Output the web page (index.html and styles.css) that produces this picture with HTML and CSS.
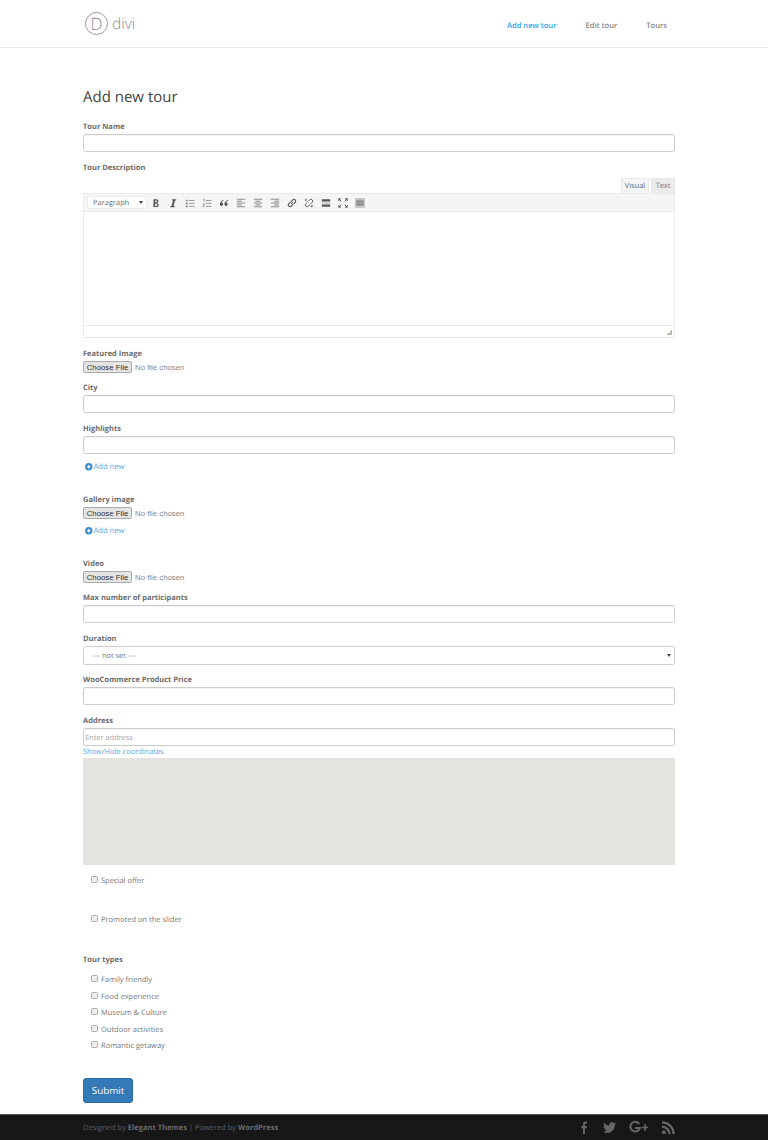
FILE: index.html
```html
<!DOCTYPE html>
<html lang="en">
<head>
<meta charset="utf-8">
<title>Add new tour</title>
<link rel="stylesheet" href="styles.css">
</head>
<body>
<header class="site-header">
  <div class="logo"><span class="logo-mark">D</span><span class="logo-word">divi</span></div>
  <nav class="nav">
    <a class="nav-link active">Add new tour</a>
    <a class="nav-link">Edit tour</a>
    <a class="nav-link">Tours</a>
  </nav>
</header>
<main class="page">
  <h1 class="title">Add new tour</h1>
  <form class="form">
    <div class="field"><label class="label">Tour Name</label><input class="input" type="text"></div>

    <div class="editor-field">
      <label class="label">Tour Description</label>
      <div class="tabs"><span class="tab tab-on">Visual</span><span class="tab">Text</span></div>
      <div class="editor">
        <div class="toolbar">
          <div class="format"><span>Paragraph</span><i class="caret"></i></div>
          <div class="tools">
          <svg class="tool" viewBox="0 0 12 12"><path d="M3 1.500h3.600c3 0 3 4 .4 4.400 3 .2 3.200 5-.3 5H3zM5 3v2.200h1.300c1.200 0 1.200-2.200 0-2.200zM5 6.800v2.700h1.500c1.400 0 1.400-2.700 0-2.700z" fill="#555" fill-rule="evenodd"/></svg>
          <svg class="tool" viewBox="0 0 12 12"><path d="M5 1.500h5L9.700 3H8.400L6.700 9.500H8L7.700 11h-5L3 9.500h1.300L6 3H4.700z" fill="#555"/></svg>
          <svg class="tool" viewBox="0 0 12 12"><path d="M1 2h2v2H1zM1 5.500h2v2H1zM1 9h2v2H1z" fill="#777"/><path d="M4.500 3h7M4.500 6.500h7M4.500 10h7" stroke="#888" fill="none"/></svg>
          <svg class="tool" viewBox="0 0 12 12"><path d="M1.500 1.500h1v2.500M1 7h2L1 10h2" stroke="#777" fill="none" stroke-width=".8"/><path d="M4.500 3h7M4.500 6.500h7M4.500 10h7" stroke="#888" fill="none"/></svg>
          <svg class="tool" viewBox="0 0 12 12"><path d="M5.500 2.500C3 3.200 1 5 1 7.500a2 2 0 1 0 2-2c0-1 1-1.800 2.500-2.200zM11 2.500C8.500 3.200 6.500 5 6.500 7.500a2 2 0 1 0 2-2c0-1 1-1.800 2.500-2.200z" fill="#555"/></svg>
          <svg class="tool" viewBox="0 0 12 12"><path d="M1 1.500h10M1 3.800h6M1 6h10M1 8.300h6M1 10.500h10" stroke="#777" fill="none"/></svg>
          <svg class="tool" viewBox="0 0 12 12"><path d="M1 1.500h10M3 3.800h6M1 6h10M3 8.300h6M1 10.500h10" stroke="#777" fill="none"/></svg>
          <svg class="tool" viewBox="0 0 12 12"><path d="M1 1.500h10M5 3.800h6M1 6h10M5 8.300h6M1 10.500h10" stroke="#777" fill="none"/></svg>
          <svg class="tool" viewBox="0 0 12 12"><path d="M5 7l2-2M4.800 4.200l2-2a2 2 0 0 1 3 3l-2 2M7.200 7.800l-2 2a2 2 0 0 1-3-3l2-2" stroke="#555" stroke-width="1.300" fill="none"/></svg>
          <svg class="tool" viewBox="0 0 12 12"><path d="M4.800 4.200l2-2a2 2 0 0 1 3 3l-2 2M7.200 7.800l-2 2a2 2 0 0 1-3-3l2-2M1 2.500h2M2.500 1v2M9 11V9M11 9.500H9" stroke="#666" stroke-width="1.200" fill="none"/></svg>
          <svg class="tool" viewBox="0 0 12 12"><path d="M1 1.500h10v2.700H1zM1 7.800h10v2.700H1z" fill="#555"/><path d="M1 6h10" stroke="#888" stroke-width=".8"/></svg>
          <svg class="tool" viewBox="0 0 12 12"><path d="M1 1l3 3M11 1L8 4M1 11l3-3M11 11L8 8M1 1h2.500M1 1v2.500M11 1H8.500M11 1v2.500M1 11h2.500M1 11V8.500M11 11H8.500M11 11V8.500" stroke="#555" stroke-width="1.200" fill="none"/></svg>
          <svg class="tool tool-on" viewBox="0 0 12 12"><path d="M1 2h10v8H1z" fill="#aaa"/><path d="M2 4h8M2 6h8M2 8h8" stroke="#666" stroke-width=".8" stroke-dasharray="1 .5"/></svg>
          </div>
        </div>
        <div class="editor-body"></div>
        <div class="editor-status"><i class="grip"></i></div>
      </div>
    </div>

    <div class="field field-file"><label class="label">Featured Image</label><input class="file" type="file"></div>
    <div class="field"><label class="label">City</label><input class="input" type="text"></div>
    <div class="field field-repeat"><label class="label">Highlights</label><input class="input" type="text">
      <a class="add-new add-after-input"><svg class="plus" viewBox="0 0 12 12"><circle cx="6" cy="6" r="6" fill="#3b8fd0"/><path d="M6 3v6M3 6h6" stroke="#fff" stroke-width="1.700"/></svg>Add new</a>
    </div>
    <div class="field field-gallery"><label class="label">Gallery image</label><input class="file" type="file">
      <a class="add-new add-after-file"><svg class="plus" viewBox="0 0 12 12"><circle cx="6" cy="6" r="6" fill="#3b8fd0"/><path d="M6 3v6M3 6h6" stroke="#fff" stroke-width="1.700"/></svg>Add new</a>
    </div>
    <div class="field field-file"><label class="label">Video</label><input class="file" type="file"></div>
    <div class="field"><label class="label">Max number of participants</label><input class="input" type="text"></div>
    <div class="field"><label class="label">Duration</label>
      <div class="select"><span>--- not set ---</span><i class="caret"></i></div>
    </div>
    <div class="field"><label class="label">WooCommerce Product Price</label><input class="input" type="text"></div>
    <div class="field-address"><label class="label">Address</label><input class="input input-address" type="text" placeholder="Enter address">
      <a class="coords">Show/Hide coordinates</a>
      <div class="map"></div>
    </div>

    <label class="check check-single"><input type="checkbox"><span>Special offer</span></label>
    <label class="check check-single"><input type="checkbox"><span>Promoted on the slider</span></label>

    <div class="types">
      <label class="label">Tour types</label>
      <div class="type-list">
        <label class="check"><input type="checkbox"><span>Family friendly</span></label>
        <label class="check"><input type="checkbox"><span>Food experience</span></label>
        <label class="check"><input type="checkbox"><span>Museum &amp; Culture</span></label>
        <label class="check"><input type="checkbox"><span>Outdoor activities</span></label>
        <label class="check"><input type="checkbox"><span>Romantic getaway</span></label>
      </div>
    </div>
    <button class="submit" type="button">Submit</button>
  </form>
</main>
<footer class="site-footer">
  <p class="credits">Designed by <b>Elegant Themes</b> | Powered by <b>WordPress</b></p>
  <div class="social">
    <svg class="soc soc-f" viewBox="0 0 8 15" preserveAspectRatio="none"><path d="M5.200 15V8.500h2.200l.4-2.600H5.200V4.300c0-.8.300-1.300 1.300-1.300H8V.6C7.700.500 6.900.5 6 .5 4 .5 2.600 1.700 2.600 4v1.900H.3v2.600h2.300V15z" fill="#666"/></svg>
    <svg class="soc soc-t" viewBox="0 0 16 13"><path d="M16 1.500c-.6.300-1.200.4-1.900.5.700-.4 1.200-1 1.400-1.800-.6.400-1.300.6-2.100.8A3.300 3.300 0 0 0 7.800 4C5.100 3.900 2.700 2.600 1.100.6.200 2.100.7 4 2.100 5c-.5 0-1-.2-1.500-.4 0 1.600 1.100 3 2.600 3.300-.5.100-1 .2-1.500.1.400 1.300 1.600 2.200 3.100 2.300A6.600 6.600 0 0 1 0 11.600 9.300 9.300 0 0 0 14.400 3.300c.6-.5 1.200-1.100 1.600-1.800z" fill="#666"/></svg>
    <svg class="soc soc-g" viewBox="0 0 22 14"><path d="M11.800 3.200A5.200 5.200 0 1 0 12.500 7.500H7" stroke="#666" stroke-width="2.200" fill="none"/><path d="M18 3.500v7M14.500 7h7" stroke="#666" stroke-width="1.800"/></svg>
    <svg class="soc soc-r" viewBox="0 0 14 14"><circle cx="2" cy="12" r="2" fill="#666"/><path d="M0 6a8 8 0 0 1 8 8M0 1.500A12.500 12.500 0 0 1 12.500 14" stroke="#666" stroke-width="2.500" fill="none"/></svg>
  </div>
</footer>
</body>
</html>
```
FILE: styles.css
```css
* { box-sizing: border-box; }
html, body { margin: 0; padding: 0; }
body { width: 768px; height: 1140px; background: #fff; color: #666; font-family: "Open Sans", "Liberation Sans", sans-serif; font-size: 8px; overflow: hidden; text-rendering: geometricPrecision; }

.site-header { height: 48px; border-bottom: 1px solid #ececec; padding: 0 101px 0 85px; display: flex; align-items: center; justify-content: space-between; }
.logo { display: flex; align-items: center; gap: 4px; color: #8a8a94; }
.logo-mark { width: 23px; height: 23px; border: 1px solid #9a9aa6; border-radius: 50%; display: flex; align-items: center; justify-content: center; font-size: 17px; font-weight: 300; line-height: 1; }
.logo-word { font-size: 15.500px; font-weight: 300; line-height: 1; }
.nav { display: flex; gap: 29px; padding-top: 5px; }
.nav-link { font-size: 7.600px; font-weight: 600; color: #888; line-height: 12px; }
.nav-link.active { color: #2ea3f2; }

.page { padding: 0 93px 0 83px; }
.title { margin: 0; padding-top: 38.500px; height: 73px; font-size: 15px; line-height: 20px; font-weight: 400; color: #444; }

.label { display: block; font-size: 7.500px; font-weight: 700; color: #6b6b6b; line-height: 12px; height: 13px; }
.field { height: 41px; }
.input { display: block; width: 100%; height: 18px; padding: 0 1px; background: #fff; border: 1px solid #ccc; border-radius: 2.500px; font: inherit; outline: none; box-shadow: inset 0 1px 1px rgba(0,0,0,.05); }
.input::placeholder { color: #a5a5a5; }

.editor-field { height: 186px; }
.tabs { display: flex; justify-content: flex-end; gap: 2px; height: 15px; margin-top: 3px; }
.tab { width: 24px; height: 15px; font-size: 7.400px; line-height: 14px; text-align: center; background: #ebebeb; color: #777; border: 1px solid #e8e8e8; border-bottom: 0; }
.tab-on { width: 28px; background: #f5f5f5; color: #666; }
.editor { border: 1px solid #ececec; border-top: 0; }
.toolbar { height: 19px; padding: 0 2px 0 3px; background: #f5f5f5; border-bottom: 1px solid #e8e8e8; border-top: 1px solid #ececec; display: flex; align-items: center; gap: 4px; }
.format { width: 60px; height: 13px; padding: 0 3px 0 5px; background: #fff; border: 1px solid #ececec; display: flex; align-items: center; justify-content: space-between; font-size: 7.300px; color: #666; letter-spacing: .1px; }
.tools { display: flex; align-items: center; gap: 7px; }
.caret { width: 0; height: 0; border-left: 2px solid transparent; border-right: 2px solid transparent; border-top: 3px solid #444; }
.tool { width: 10px; height: 10px; flex: none; }
.tool-on { background: #ccc; }
.editor-body { height: 113px; background: #fff; }
.editor-status { height: 12px; border-top: 1px solid #ececec; display: flex; justify-content: flex-end; align-items: flex-end; padding: 0 2px 2px 0; }
.grip { width: 5px; height: 5px; background: linear-gradient(135deg, transparent 50%, #b5b9b0 50%); }

.field-file { height: 34px; }
.file { display: block; width: 200px; height: 12px; font: 400 7.800px "Liberation Sans", Arial, sans-serif; color: #888; padding: 0; }
.file::file-selector-button { height: 12px; width: 49px; margin-right: 3px; padding: 0; font: inherit; color: #333; background: #e4e4e4; border: 1px solid #aaa; border-radius: 2px; }
.field-repeat { height: 71px; }
.field-gallery { height: 64px; }
.add-new { display: flex; align-items: center; gap: 1px; height: 12px; padding-left: 2px; font-size: 7.600px; color: #5aa7e4; }
.add-after-input { margin-top: 7px; }
.add-after-file { margin-top: 6px; }
.plus { width: 7.500px; height: 7.500px; flex: none; }

.select { display: flex; align-items: center; justify-content: space-between; height: 19px; padding: 0 3px 0 9px; border: 1px solid #ccc; border-radius: 2.500px; font-size: 7.400px; color: #777; }
.field-address { height: 150px; }
.input-address { font-size: 7.400px; }
.coords { display: block; height: 12px; line-height: 12px; font-size: 7.450px; color: #5aa7e4; }
.map { height: 107px; background: #e5e3df; }

.check { display: flex; align-items: flex-start; padding-left: 8px; height: 16.500px; font-size: 7.500px; line-height: 11px; color: #777; }
.check input { appearance: none; width: 7px; height: 7px; margin: 0 3px 0 0; flex: none; background: #eee; border: 1px solid #aaa; border-radius: 1.500px; }
.check-single { height: 39px; padding-top: 11px; }
.types { padding-top: 11px; }
.types .label { height: 15px; }
.type-list { padding-top: 6px; }
.submit { display: block; width: 50px; height: 25px; margin-top: 20px; background: #337ab7; color: #fff; border: 1px solid #2e6da4; border-radius: 3px; font: 400 9.800px "Open Sans", sans-serif; padding: 0; }

.site-footer { position: absolute; left: 0; right: 0; top: 1114px; height: 26px; background: #171717; border-top: 1px solid #555; padding: 0 93px 0 83px; display: flex; align-items: center; justify-content: space-between; }
.credits { margin: 0; font-size: 7.500px; color: #5f5f5f; }
.credits b { font-weight: 700; color: #6b6b6b; }
.social { display: flex; align-items: center; gap: 12px; }
.soc { display: block; height: 13px; flex: none; }
.soc-f { width: 6px; margin-right: 4px; }
.soc-t { width: 13px; }
.soc-g { width: 21px; margin-right: 1px; }
.soc-r { width: 13px; }
```
